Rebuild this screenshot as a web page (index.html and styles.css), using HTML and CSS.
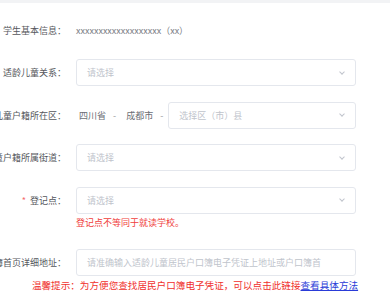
FILE: index.html
```html
<!DOCTYPE html>
<html lang="zh-CN">
<head>
  <meta charset="UTF-8">
  <meta name="viewport" content="width=device-width, initial-scale=1.0">
  <title>学生信息登记</title>
  <link rel="stylesheet" href="styles.css">
</head>
<body>
  <div class="top-band"></div>

  <form class="form">
    <!-- Student info -->
    <div class="form-item">
      <div class="form-label">学生基本信息：</div>
      <div class="form-content">
        <span class="value-text">xxxxxxxxxxxxxxxxxxx（xx）</span>
      </div>
    </div>

    <div class="form-item">
      <div class="form-label">适龄儿童关系：</div>
      <div class="form-content">
        <div class="select">
          <span class="placeholder">请选择</span>
          <span class="arrow"></span>
        </div>
      </div>
    </div>

    <div class="form-item">
      <div class="form-label">儿童户籍所在区：</div>
      <div class="form-content">
        <div class="region">
          <span class="region-text">四川省</span>
          <span class="region-sep">-</span>
          <span class="region-text">成都市</span>
          <span class="region-sep">-</span>
          <div class="select select-region">
            <span class="placeholder">选择区（市）县</span>
            <span class="arrow"></span>
          </div>
        </div>
      </div>
    </div>

    <div class="form-item">
      <div class="form-label">儿童户籍所属街道：</div>
      <div class="form-content">
        <div class="select">
          <span class="placeholder">请选择</span>
          <span class="arrow"></span>
        </div>
      </div>
    </div>

    <div class="form-item form-item-error">
      <div class="form-label"><span class="required">*</span>登记点：</div>
      <div class="form-content">
        <div class="select">
          <span class="placeholder">请选择</span>
          <span class="arrow"></span>
        </div>
        <div class="error-text">登记点不等同于就读学校。</div>
      </div>
    </div>

    <div class="form-item form-item-last">
      <div class="form-label">户口簿首页详细地址：</div>
      <div class="form-content">
        <div class="input">
          <span class="placeholder">请准确输入适龄儿童居民户口簿电子凭证上地址或户口簿首</span>
        </div>
      </div>
    </div>

    <div class="hint">温馨提示：为方便您查找居民户口簿电子凭证，可以点击此链接<a href="#" class="hint-link">查看具体方法</a></div>
  </form>
</body>
</html>
```

FILE: styles.css
```css
/* Base */
* {
  margin: 0;
  padding: 0;
  box-sizing: border-box;
}

body {
  width: 390px;
  height: 293px;
  overflow: hidden;
  background: #fff;
  font-family: "Noto Sans CJK SC", "Noto Sans", sans-serif;
  font-size: 9px;
  color: #606266;
}

.top-band {
  height: 3px;
  background: #f2f3f5;
}

/* Form layout */
.form {
  padding-top: 13.5px;
}

.form-item {
  display: flex;
  align-items: flex-start;
  margin-bottom: 15.5px;
}

.form-item-error {
  margin-bottom: 20px;
}

.form-item-last {
  margin-bottom: 3px;
}

/* labels are right aligned and spill out of the left edge when long */
.form-label {
  flex: none;
  width: 66px;
  min-width: 0;
  display: flex;
  justify-content: flex-end;
  height: 27px;
  line-height: 27px;
  white-space: nowrap;
  color: #55575c;
}

.required {
  color: #f56c6c;
  margin-right: 4px;
}

.form-content {
  flex: none;
  margin-left: 10px;
  width: 280px;
  line-height: 27px;
}

.value-text {
  color: #7a7d84;
}

/* Select and input boxes */
.select,
.input {
  height: 27px;
  border: 1px solid #e4e7ed;
  border-radius: 3px;
  padding: 0 10px;
  display: flex;
  align-items: center;
  justify-content: space-between;
  line-height: 25px;
  white-space: nowrap;
  overflow: hidden;
}

.placeholder {
  color: #c0c4cc;
}

.arrow {
  width: 4px;
  height: 4px;
  border-right: 1px solid #c0c4cc;
  border-bottom: 1px solid #c0c4cc;
  transform: rotate(45deg);
  margin-top: -2px;
  margin-right: 1px;
}

.region {
  display: flex;
  align-items: center;
}

.region-text {
  color: #6b6e75;
  margin-left: 3px;
}

.region-sep {
  color: #9a9ca1;
  margin: 0 7px;
}

.select-region {
  flex: 1;
  margin-left: -2px;
}

.error-text {
  color: #f0403c;
  line-height: 12px;
  margin-top: 3px;
}

/* Hint line */
.hint {
  text-align: center;
  color: #f0302c;
  font-size: 9.6px;
  line-height: 12px;
  white-space: nowrap;
}

.hint-link {
  color: #2a3bd8;
  text-decoration: underline;
}
```
